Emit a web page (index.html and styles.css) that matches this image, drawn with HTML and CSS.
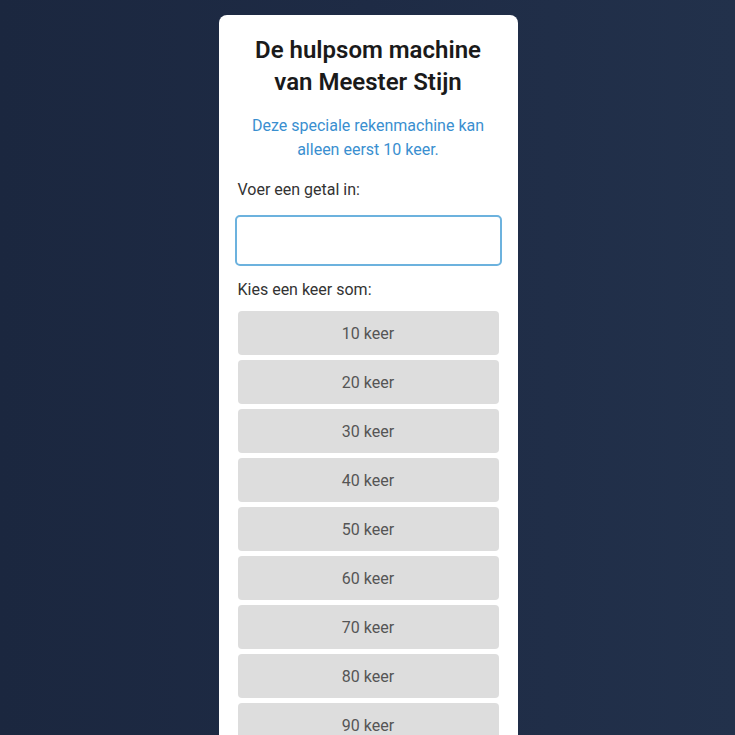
FILE: index.html
```
<!DOCTYPE html>
<html lang="nl">
<head>
<meta charset="utf-8">
<title>De hulpsom machine</title>
<link rel="stylesheet" href="styles.css">
</head>
<body>
<main class="card">
  <h1 class="title">De hulpsom machine van Meester Stijn</h1>
  <p class="subtitle">Deze speciale rekenmachine kan alleen eerst 10 keer.</p>
  <label class="label" for="getal">Voer een getal in:</label>
  <input class="number-input" id="getal" type="text">
  <p class="label label-som">Kies een keer som:</p>
  <div class="buttons">
    <button class="btn">10 keer</button>
    <button class="btn">20 keer</button>
    <button class="btn">30 keer</button>
    <button class="btn">40 keer</button>
    <button class="btn">50 keer</button>
    <button class="btn">60 keer</button>
    <button class="btn">70 keer</button>
    <button class="btn">80 keer</button>
    <button class="btn">90 keer</button>
    <button class="btn">100 keer</button>
  </div>
</main>
</body>
</html>
```
FILE: styles.css
```
* { box-sizing: border-box; }
html, body { height: 100%; }
body {
  margin: 0;
  font-family: Roboto, "Liberation Sans", sans-serif;
  background: linear-gradient(90deg, #1b273f 0%, #1e2b45 50%, #22314b 100%);
  overflow: hidden;
}
.card {
  width: 299px;
  margin: 15px 0 0 calc(50% - 149px);
  background: #ffffff;
  border-radius: 8px;
  padding: 19px 19px 20px;
  display: flex;
  flex-direction: column;
}
.title {
  margin: 0;
  font-size: 24px;
  line-height: 32px;
  font-weight: 600;
  color: #1a1a1a;
  text-align: center;
  padding: 0 16px;
}
.subtitle {
  margin: 16px 0 0;
  font-size: 16px;
  line-height: 24px;
  color: #3a8fd0;
  text-align: center;
}
.label {
  display: block;
  margin: 16px 0 0;
  font-size: 16px;
  line-height: 24px;
  color: #333333;
}
.number-input {
  display: block;
  margin: 13px -3px 0;
  height: 51px;
  border: 2px solid #6cb2de;
  border-radius: 5px;
  outline: none;
  font: inherit;
  padding: 0 12px;
}
.label-som { margin-top: 12px; }
.buttons {
  margin-top: 9px;
  display: flex;
  flex-direction: column;
  gap: 5px;
}
.btn {
  height: 44px;
  border: none;
  border-radius: 4px;
  background: #dddddd;
  color: #555555;
  font-family: inherit;
  font-size: 16px;
}
```
